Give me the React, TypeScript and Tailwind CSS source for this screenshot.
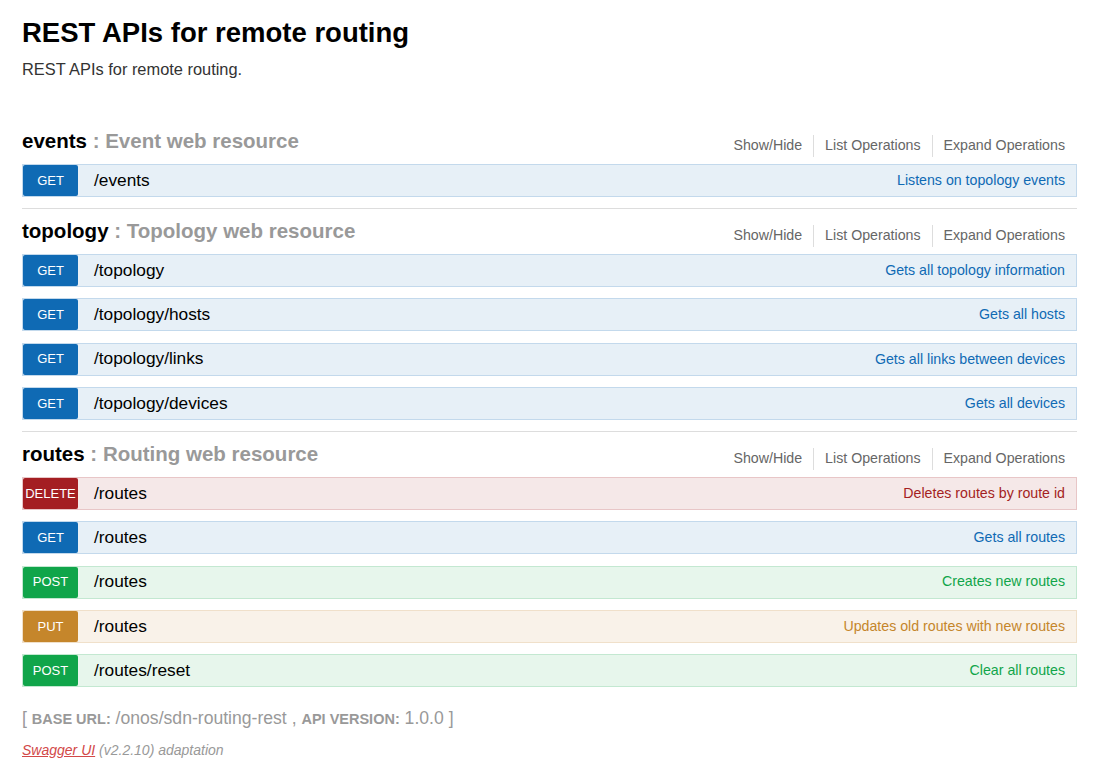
import React from 'react';

type Method = 'GET' | 'POST' | 'PUT' | 'DELETE';

const methodStyles: Record<Method, { row: string; badge: string; summary: string }> = {
  GET: { row: 'bg-[#e7f0f7] border-[#c3d9ec]', badge: 'bg-[#0f6ab4]', summary: 'text-[#0f6ab4]' },
  POST: { row: 'bg-[#e7f6ec] border-[#c3e8d1]', badge: 'bg-[#10a54a]', summary: 'text-[#10a54a]' },
  PUT: { row: 'bg-[#f9f2e9] border-[#f0e0ca]', badge: 'bg-[#c5862b]', summary: 'text-[#c5862b]' },
  DELETE: { row: 'bg-[#f5e8e8] border-[#e8c6c7]', badge: 'bg-[#a41e22]', summary: 'text-[#a41e22]' },
};

const resources: {
  name: string;
  description: string;
  ops: { method: Method; path: string; summary: string }[];
}[] = [
  {
    name: 'events',
    description: 'Event web resource',
    ops: [{ method: 'GET', path: '/events', summary: 'Listens on topology events' }],
  },
  {
    name: 'topology',
    description: 'Topology web resource',
    ops: [
      { method: 'GET', path: '/topology', summary: 'Gets all topology information' },
      { method: 'GET', path: '/topology/hosts', summary: 'Gets all hosts' },
      { method: 'GET', path: '/topology/links', summary: 'Gets all links between devices' },
      { method: 'GET', path: '/topology/devices', summary: 'Gets all devices' },
    ],
  },
  {
    name: 'routes',
    description: 'Routing web resource',
    ops: [
      { method: 'DELETE', path: '/routes', summary: 'Deletes routes by route id' },
      { method: 'GET', path: '/routes', summary: 'Gets all routes' },
      { method: 'POST', path: '/routes', summary: 'Creates new routes' },
      { method: 'PUT', path: '/routes', summary: 'Updates old routes with new routes' },
      { method: 'POST', path: '/routes/reset', summary: 'Clear all routes' },
    ],
  },
];

function Operation({ method, path, summary }: { method: Method; path: string; summary: string }) {
  const s = methodStyles[method];
  return (
    <div className={`flex h-[33px] items-stretch border ${s.row}`}>
      <span className={`flex w-[55px] items-center justify-center rounded-[2px] text-[13px] text-white ${s.badge}`}>
        {method}
      </span>
      <span className="ml-[16px] flex items-center text-[17.3px] text-black">{path}</span>
      <span className={`ml-auto mr-[11px] flex items-center text-[14.2px] ${s.summary}`}>{summary}</span>
    </div>
  );
}

export default function App() {
  return (
    <div className="min-h-[783px] bg-white font-['Liberation_Sans',Arial,sans-serif] text-[#333]">
      <div className="w-[1099px] px-[22px] pt-[15px] pb-[20px]">
        <h1 className="text-[27.5px] font-bold leading-[36px] text-black">REST APIs for remote routing</h1>
        <p className="mt-[8px] text-[16.4px] leading-[20px] text-[#333]">REST APIs for remote routing.</p>

        <div className="mt-[40px]">
          {resources.map((r, i) => (
            <div
              key={r.name}
              className={i < resources.length - 1 ? 'border-b border-[#ddd] pb-[11px]' : ''}
            >
              <div className="flex h-[45px] justify-between">
                <h2 className="text-[20.5px] font-bold leading-[44px]">
                  <span className="text-black">{r.name}</span>
                  <span className="text-[#999]"> : {r.description}</span>
                </h2>
                <ul className="mr-[12px] mt-[17px] flex h-[20px] items-center text-[14.2px] text-[#666]">
                  <li className="border-r border-[#ddd] pr-[11px]">Show/Hide</li>
                  <li className="border-r border-[#ddd] px-[11px]">List Operations</li>
                  <li className="pl-[11px]">Expand Operations</li>
                </ul>
              </div>
              <div className="flex flex-col gap-[11.33px]">
                {r.ops.map((op, j) => (
                  <Operation key={j} {...op} />
                ))}
              </div>
            </div>
          ))}
        </div>

        <div className="mt-[19px] text-[17.6px] leading-[24px] text-[#999]">
          [ <span className="text-[14.5px] font-bold uppercase">Base URL:</span> /onos/sdn-routing-rest ,{' '}
          <span className="text-[14.5px] font-bold uppercase">API Version:</span> 1.0.0 ]
        </div>
        <div className="mt-[10px] text-[14px] italic leading-[18px] text-[#999]">
          <a className="text-[#d24848] underline">Swagger UI</a> (v2.2.10) adaptation
        </div>
      </div>
    </div>
  );
}
